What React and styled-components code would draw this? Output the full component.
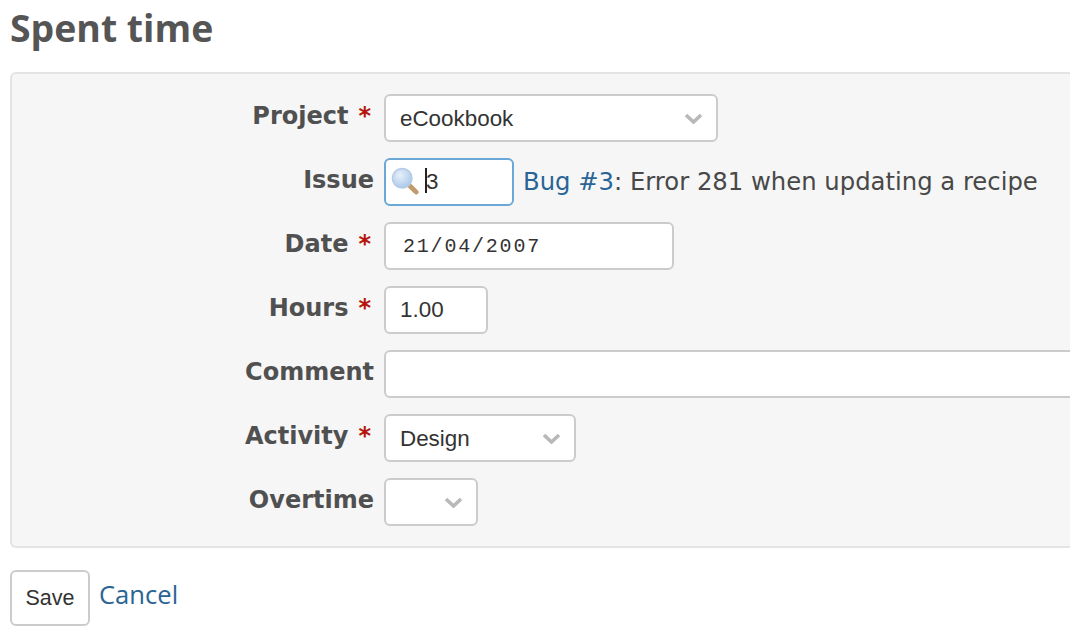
import styled, { createGlobalStyle } from "styled-components";

const GlobalStyle = createGlobalStyle`
  html, body {
    margin: 0;
    height: 636px;
    overflow: hidden;
    background: #fff;
  }
`;

const Page = styled.div`
  width: 1200px;
  padding: 0 0 0 10px;
  font-family: "DejaVu Sans", Verdana, sans-serif;
  color: #484848;
`;

const Title = styled.h2`
  margin: 0;
  height: 72px;
  padding-top: 6px;
  box-sizing: border-box;
  font-family: "Open Sans", sans-serif;
  font-size: 37.4px;
  line-height: 44px;
  font-weight: 700;
  color: #555;
`;

const Box = styled.div`
  box-sizing: border-box;
  height: 476px;
  padding: 20px 0 0;
  background: #f6f6f6;
  border: 2px solid #e4e4e4;
  border-right: none;
  border-radius: 6px 0 0 6px;
  display: flex;
  flex-direction: column;
  gap: 16px;
`;

const Row = styled.div`
  display: flex;
  align-items: center;
  height: 48px;
`;

const Label = styled.label`
  box-sizing: border-box;
  width: 362px;
  flex: none;
  margin-right: 10px;
  padding-bottom: 4px;
  text-align: right;
  font-size: 24px;
  font-weight: 700;
  color: #505050;
  white-space: nowrap;
`;

const Required = styled.span`
  margin-left: 10px;
  margin-right: 3px;
  color: #b5140a;
`;

const Control = styled.div`
  position: relative;
  flex: none;
  width: ${(props) => props.width}px;
  height: 48px;
`;

const Select = styled.select`
  appearance: none;
  box-sizing: border-box;
  width: 100%;
  height: 100%;
  padding: 0 0 0 14px;
  background: #fff;
  border: 2px solid #ccc;
  border-radius: 6px;
  font-family: "Liberation Sans", Arial, sans-serif;
  font-size: 22.4px;
  color: #333;
`;

const Chevron = styled.svg`
  position: absolute;
  top: 19px;
  right: 15px;
  width: 19px;
  height: 11px;
  pointer-events: none;
`;

const Input = styled.input`
  box-sizing: border-box;
  width: 100%;
  height: 100%;
  padding: 0 0 0 14px;
  background: #fff;
  border: 2px solid #ccc;
  border-radius: 6px;
  outline: none;
  font-family: "Liberation Sans", Arial, sans-serif;
  font-size: 22.4px;
  color: #333;
`;

const DateInput = styled(Input)`
  padding-left: 17px;
  font-family: "Liberation Mono", monospace;
  font-size: 20px;
  letter-spacing: 1.8px;
`;

const IssueInput = styled(Input)`
  padding-left: 40px;
  border-color: #6aa8d8;
`;

const SearchIcon = styled.svg`
  position: absolute;
  top: 9px;
  left: 7px;
  width: 28px;
  height: 28px;
`;

const Caret = styled.span`
  position: absolute;
  top: 10px;
  left: 41px;
  width: 2px;
  height: 25px;
  background: #222;
`;

const IssueText = styled.span`
  margin-left: 9px;
  padding-bottom: 2px;
  font-size: 24.3px;
  color: #484848;
  white-space: nowrap;
`;

const Link = styled.a`
  color: #2a6496;
  text-decoration: none;
  cursor: pointer;
`;

const Actions = styled.div`
  display: flex;
  align-items: flex-start;
  margin-top: 22px;
`;

const SaveButton = styled.button`
  box-sizing: border-box;
  width: 80px;
  height: 56px;
  padding: 0;
  background: #fff;
  border: 2px solid #ccc;
  border-radius: 6px;
  font-family: "Liberation Sans", Arial, sans-serif;
  font-size: 21.5px;
  color: #333;
`;

const CancelLink = styled(Link)`
  margin: 7px 0 0 9px;
  font-size: 25.6px;
  font-family: "Open Sans", sans-serif;
`;

const Arrow = () => (
  <Chevron viewBox="0 0 19 11">
    <path d="M2 2 L9.5 9 L17 2" fill="none" stroke="#b8b8b8" strokeWidth="3.6" />
  </Chevron>
);

const Magnifier = () => (
  <SearchIcon viewBox="0 0 30 30">
    <defs>
      <radialGradient id="lens" cx="40%" cy="35%" r="70%">
        <stop offset="0" stopColor="#e6f0fb" />
        <stop offset="1" stopColor="#a9c6e8" />
      </radialGradient>
    </defs>
    <path d="M19 19 L27 27" stroke="#c09a6b" strokeWidth="5" strokeLinecap="round" />
    <circle cx="12" cy="12" r="10.5" fill="url(#lens)" stroke="#b4cbe6" strokeWidth="1.6" />
  </SearchIcon>
);

const App = () => {
  return (
    <Page>
      <GlobalStyle />
      <Title>Spent time</Title>
      <Box>
        <Row>
          <Label>
            Project<Required>*</Required>
          </Label>
          <Control width={334}>
            <Select defaultValue="eCookbook">
              <option>eCookbook</option>
            </Select>
            <Arrow />
          </Control>
        </Row>
        <Row>
          <Label>Issue</Label>
          <Control width={130}>
            <IssueInput defaultValue="3" />
            <Magnifier />
            <Caret />
          </Control>
          <IssueText>
            <Link>Bug #3</Link>: Error 281 when updating a recipe
          </IssueText>
        </Row>
        <Row>
          <Label>
            Date<Required>*</Required>
          </Label>
          <Control width={290}>
            <DateInput defaultValue="21/04/2007" />
          </Control>
        </Row>
        <Row>
          <Label>
            Hours<Required>*</Required>
          </Label>
          <Control width={104}>
            <Input defaultValue="1.00" />
          </Control>
        </Row>
        <Row>
          <Label>Comment</Label>
          <Control width={800}>
            <Input />
          </Control>
        </Row>
        <Row>
          <Label>
            Activity<Required>*</Required>
          </Label>
          <Control width={192}>
            <Select defaultValue="Design">
              <option>Design</option>
            </Select>
            <Arrow />
          </Control>
        </Row>
        <Row>
          <Label>Overtime</Label>
          <Control width={94}>
            <Select defaultValue="">
              <option></option>
            </Select>
            <Arrow />
          </Control>
        </Row>
      </Box>
      <Actions>
        <SaveButton>Save</SaveButton>
        <CancelLink>Cancel</CancelLink>
      </Actions>
    </Page>
  );
};

export default App;
